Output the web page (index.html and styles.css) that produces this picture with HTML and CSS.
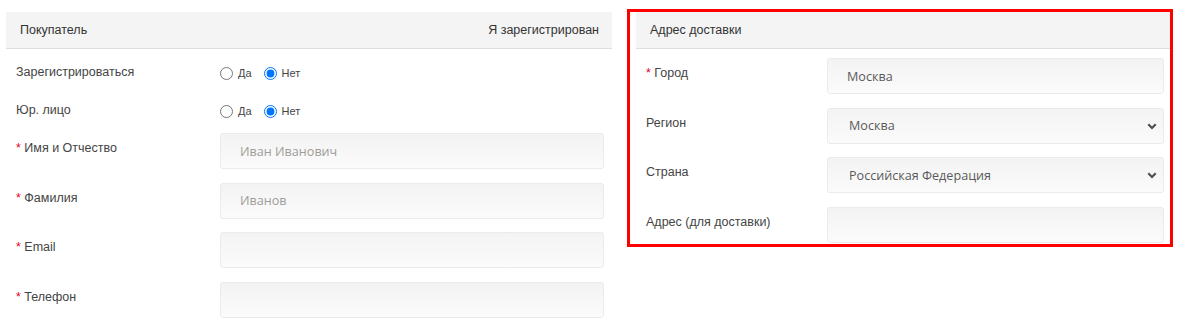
FILE: index.html
```html
<!DOCTYPE html>
<html lang="ru">
<head>
<meta charset="utf-8">
<title>Оформление заказа</title>
<link rel="stylesheet" href="styles.css">
</head>
<body>
<div class="page">
  <section class="panel panel-buyer">
    <div class="panel-head">
      <span>Покупатель</span>
      <span>Я зарегистрирован</span>
    </div>
    <div class="panel-body buyer-body">
      <div class="radio-row">
        <div class="label">Зарегистрироваться</div>
        <div class="radios">
          <label class="radio"><input type="radio" name="reg"> Да</label>
          <label class="radio"><input type="radio" name="reg" checked> Нет</label>
        </div>
      </div>
      <div class="radio-row">
        <div class="label">Юр. лицо</div>
        <div class="radios">
          <label class="radio"><input type="radio" name="ur"> Да</label>
          <label class="radio"><input type="radio" name="ur" checked> Нет</label>
        </div>
      </div>
      <div class="fields">
        <div class="field-row">
          <div class="label"><span class="req">*</span> Имя и Отчество</div>
          <input class="control" type="text" placeholder="Иван Иванович">
        </div>
        <div class="field-row">
          <div class="label"><span class="req">*</span> Фамилия</div>
          <input class="control" type="text" placeholder="Иванов">
        </div>
        <div class="field-row">
          <div class="label"><span class="req">*</span> Email</div>
          <input class="control" type="text">
        </div>
        <div class="field-row">
          <div class="label"><span class="req">*</span> Телефон</div>
          <input class="control" type="text">
        </div>
      </div>
    </div>
  </section>

  <div class="highlight">
    <section class="panel panel-address">
      <div class="panel-head">
        <span>Адрес доставки</span>
      </div>
      <div class="panel-body address-body">
        <div class="fields">
          <div class="field-row">
            <div class="label"><span class="req">*</span> Город</div>
            <input class="control" type="text" value="Москва">
          </div>
          <div class="field-row">
            <div class="label">Регион</div>
            <div class="select-wrap">
              <select class="control select"><option>Москва</option></select>
              <svg class="chevron" width="10" height="7" viewBox="0 0 10 7"><path d="M1.3 1.3 L5 5 L8.7 1.3" fill="none" stroke="#4a4f57" stroke-width="2.2"/></svg>
            </div>
          </div>
          <div class="field-row">
            <div class="label">Страна</div>
            <div class="select-wrap">
              <select class="control select"><option>Российская Федерация</option></select>
              <svg class="chevron" width="10" height="7" viewBox="0 0 10 7"><path d="M1.3 1.3 L5 5 L8.7 1.3" fill="none" stroke="#4a4f57" stroke-width="2.2"/></svg>
            </div>
          </div>
          <div class="field-row">
            <div class="label">Адрес (для доставки)</div>
            <input class="control" type="text">
          </div>
        </div>
      </div>
    </section>
  </div>
</div>
</body>
</html>
```

FILE: styles.css
```css
* { box-sizing: border-box; }

html, body {
  margin: 0;
  background: #fff;
}

body {
  font-family: "Liberation Sans", Arial, sans-serif;
  font-size: 12.5px;
  color: #3c3c3c;
}

.page {
  display: flex;
  align-items: flex-start;
  padding: 9px 0 0 6px;
}

.panel-buyer {
  width: 606px;
  margin-top: 3px;
}

.highlight {
  margin-left: 15px;
  width: 546px;
  border: 3px solid #ff0000;
  padding: 0 0 0 6px;
}

.panel-address {
  width: 534px;
}

.panel-head {
  display: flex;
  justify-content: space-between;
  align-items: center;
  height: 37px;
  padding: 0 13px 1px 14px;
  background: #f4f4f4;
  border-bottom: 1px solid #dedede;
  color: #333;
}

.buyer-body {
  padding: 8px 8px 0 10px;
}

.address-body {
  padding: 9px 6px 1px 10px;
}

.radio-row {
  display: grid;
  grid-template-columns: 204px 1fr;
  height: 38px;
}

.label {
  padding-top: 6px;
  line-height: 18px;
  color: #444;
}

.req {
  color: #e8001c;
}

.radios {
  display: flex;
  align-items: center;
  height: 18px;
  margin-top: 7px;
  gap: 12px;
  font-size: 11px;
  color: #444;
}

.radio {
  display: flex;
  align-items: center;
  gap: 5px;
}

.radio input {
  margin: 0;
  width: 13px;
  height: 13px;
}

.fields {
  display: flex;
  flex-direction: column;
  gap: 13.5px;
}

.field-row {
  display: grid;
  grid-template-columns: 204px 1fr;
  height: 36px;
}

.address-body .field-row {
  grid-template-columns: 181px 1fr;
}

.control {
  width: 100%;
  height: 36px;
  border: 1px solid #ebebeb;
  border-radius: 3px;
  background: linear-gradient(#f3f3f3, #fbfbfb);
  padding: 0 19px;
  font-family: "Open Sans", sans-serif;
  font-size: 12.6px;
  color: #5a5a5a;
  outline: none;
}

.control::placeholder {
  color: #a09c98;
}

.select-wrap {
  position: relative;
}

.select {
  appearance: none;
  -webkit-appearance: none;
  padding-left: 21px;
}

.chevron {
  position: absolute;
  right: 7px;
  top: 15px;
  pointer-events: none;
}
```
